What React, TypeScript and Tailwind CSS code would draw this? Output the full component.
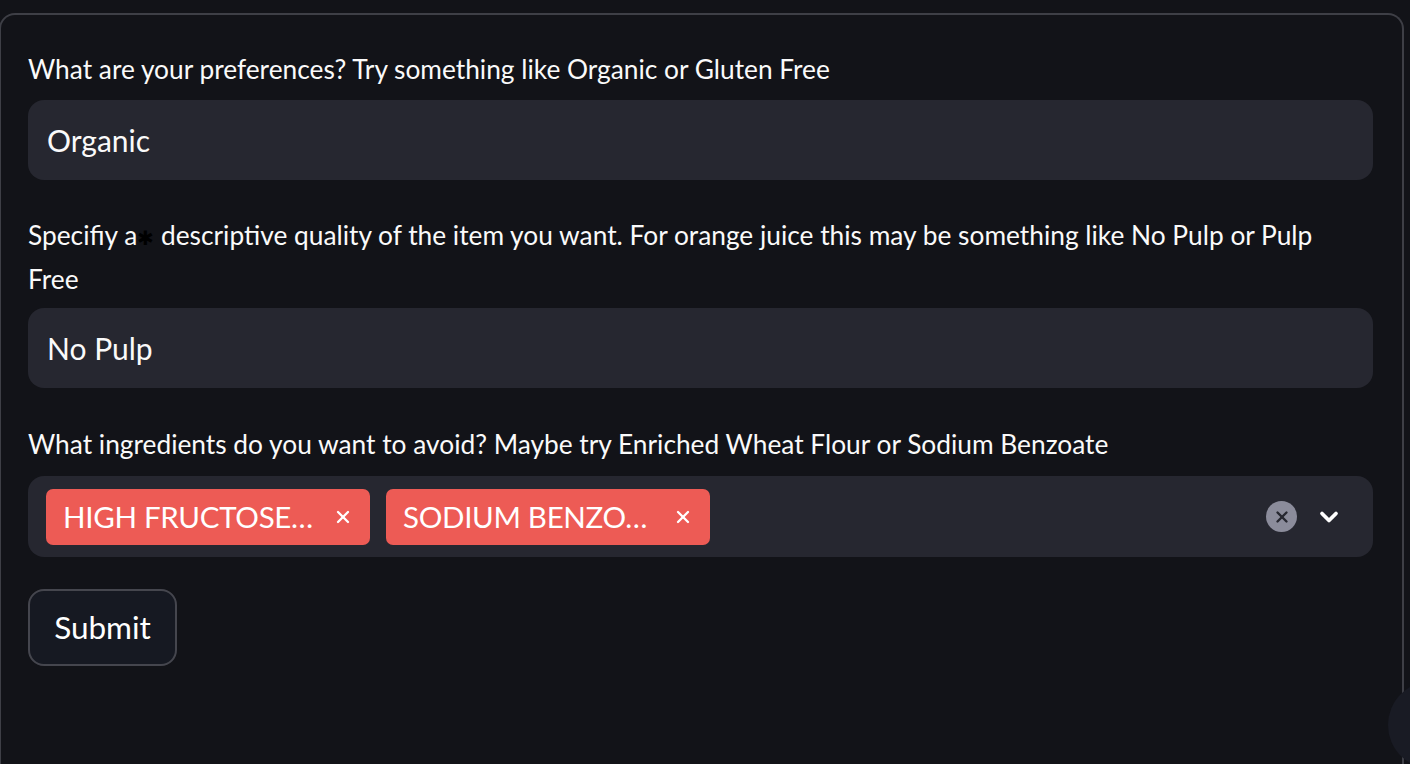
import { X, ChevronDown } from "lucide-react";

const font = { fontFamily: '"Lato", "Noto Sans", sans-serif' };

function Chip({ label }: { label: string }) {
  return (
    <div className="flex items-center h-[56px] w-[324px] pl-[17px] pr-[17px] bg-[#ed5b55] rounded-[7px] text-white">
      <span className="flex-1 text-[29.5px] leading-none tracking-[-0.3px] whitespace-nowrap">{label}</span>
      <X className="w-[20px] h-[20px]" strokeWidth={2.8} />
    </div>
  );
}

export default function App() {
  return (
    <div className="relative h-[764px] w-[1410px] overflow-hidden bg-[#121318] text-[#fafafa]" style={font}>
      <div className="mt-[13px] ml-[-1px] w-[1405px] h-[751px] border-2 border-b-0 border-[#3e3f46] rounded-t-[16px] pt-[32px] pl-[27px] pr-[29px]">
        <label className="block text-[26.3px] leading-[44px] mb-[9px]">
          What are your preferences? Try something like Organic or Gluten Free
        </label>
        <div className="flex items-center h-[80px] rounded-[16px] bg-[#262730] px-[19px] text-[30px]">
          Organic
        </div>

        <label className="block text-[26.3px] leading-[44px] mt-[33px] mb-[7px]">
          Specifiy a<span className="text-black text-[20px] leading-[0]">✱</span> descriptive quality of the item you want. For orange juice this may be something like No Pulp or Pulp
          <br />
          Free
        </label>
        <div className="flex items-center h-[80px] rounded-[16px] bg-[#262730] px-[19px] text-[30px]">
          No Pulp
        </div>

        <label className="block text-[26.3px] leading-[44px] mt-[34px] mb-[10px]">
          What ingredients do you want to avoid? Maybe try Enriched Wheat Flour or Sodium Benzoate
        </label>
        <div className="flex items-center h-[81px] rounded-[16px] bg-[#262730] pl-[18px] pr-[30px]">
          <div className="flex flex-1 gap-[16px]">
            <Chip label="HIGH FRUCTOSE…" />
            <Chip label="SODIUM BENZO…" />
          </div>
          <div className="flex items-center justify-center w-[31px] h-[31px] rounded-full bg-[#8b8c9b] text-[#262730]">
            <X className="w-[18px] h-[18px]" strokeWidth={3.2} />
          </div>
          <ChevronDown className="ml-[18px] w-[28px] h-[28px] text-white" strokeWidth={3.2} />
        </div>

        <button className="mt-[32px] h-[77px] w-[149px] rounded-[16px] border-2 border-[#45464e] bg-[#161922] text-[31.5px] text-white">
          Submit
        </button>
      </div>
      <div className="absolute left-[1388px] top-[681px] w-[88px] h-[88px] rounded-full bg-[#191b24]" />
    </div>
  );
}
